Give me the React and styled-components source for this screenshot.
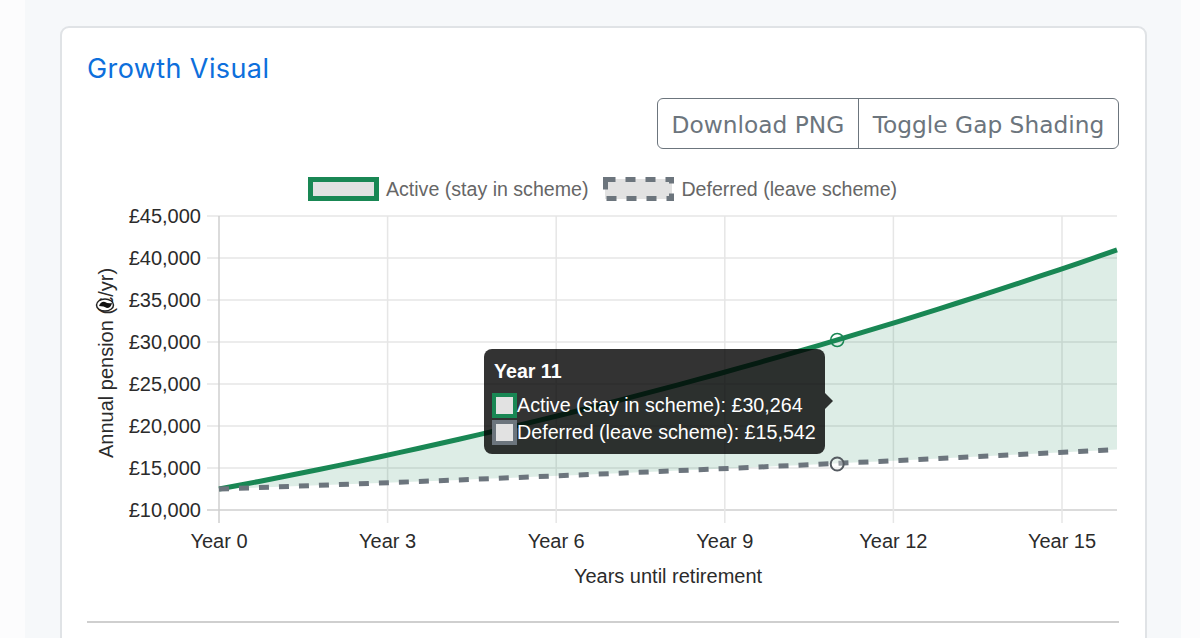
import styled, { createGlobalStyle } from "styled-components";

const GlobalStyle = createGlobalStyle`
  html, body {
    margin: 0;
    padding: 0;
    height: 638px;
    overflow: hidden;
    background: #fcfcfd;
  }
`;

const Page = styled.div`
  height: 638px;
  box-sizing: border-box;
  margin: 0 19px 0 25px;
  padding: 26px 34px 0 35px;
  overflow: hidden;
  background: #f6f8fa;
`;

const Card = styled.section`
  box-sizing: border-box;
  height: 640px;
  background: #fff;
  border: 2px solid #e0e3e6;
  border-radius: 9px;
  padding: 21px 26px 0 25px;
`;

const Title = styled.h2`
  margin: 0;
  font-family: "Inter", "Liberation Sans", sans-serif;
  font-weight: 400;
  font-size: 27px;
  letter-spacing: 0.4px;
  line-height: 40px;
  color: #0d6fdc;
`;

const Toolbar = styled.div`
  display: flex;
  justify-content: flex-end;
  margin-top: 9px;
`;

const ButtonGroup = styled.div`
  display: flex;
  border: 1.5px solid #6c757d;
  border-radius: 6px;
`;

const GroupButton = styled.button`
  height: 49px;
  padding: 2px 13.75px 0;
  border: 0;
  background: none;
  color: #6c757d;
  font-family: "DejaVu Sans", sans-serif;
  font-size: 23.3px;
  & + & {
    border-left: 1.5px solid #6c757d;
  }
`;

const Legend = styled.div`
  display: flex;
  justify-content: center;
  gap: 15px;
  margin-top: 28px;
  padding-right: 1px;
`;

const LegendItem = styled.div`
  display: flex;
  align-items: center;
  gap: 7px;
  height: 24px;
  font-family: "Liberation Sans", sans-serif;
  font-size: 19.6px;
  color: #666;
`;

const SwatchSvg = styled.svg`
  display: block;
  flex: none;
`;

const ChartArea = styled.div`
  position: relative;
  margin-top: 2px;
`;

const ChartSvg = styled.svg`
  display: block;
  text {
    font-family: "Liberation Sans", sans-serif;
    font-size: 20px;
    fill: #2b2b2b;
  }
`;

const Tooltip = styled.div`
  position: absolute;
  left: 397px;
  top: 146px;
  width: 341px;
  height: 105px;
  box-sizing: border-box;
  padding: 12px 10px;
  border-radius: 8px;
  background: rgba(0, 0, 0, 0.8);
  color: #fff;
  font-family: "Liberation Sans", sans-serif;
  font-size: 19.7px;
  &::after {
    content: "";
    position: absolute;
    left: 100%;
    top: 44px;
    border: 8px solid transparent;
    border-left-color: rgba(0, 0, 0, 0.8);
    border-right-width: 0;
  }
`;

const TooltipTitle = styled.div`
  font-weight: 700;
  font-size: 19.6px;
  line-height: 21px;
  margin-bottom: 10px;
`;

const TooltipRow = styled.div`
  display: flex;
  align-items: center;
  height: 27px;
  white-space: nowrap;
`;

const TooltipBox = styled.span`
  box-sizing: border-box;
  flex: none;
  width: 25px;
  height: 25px;
  margin-left: -2px;
  background: #e2e2e2;
  border: 4.5px solid ${(p) => p.$color};
`;

const Divider = styled.hr`
  margin: 26px 0 0;
  border: 0;
  border-top: 2px solid #cfcfcf;
`;

const GREEN = "#198754";
const GREY = "#6c757d";

// plot coordinates are page pixels, shifted to the svg origin
const LEFT = 219;
const RIGHT = 1117;
const X_OFF = 87;
const Y_OFF = 203;
const xTicks = [0, 3, 6, 9, 12, 15];
const yTicks = [45, 40, 35, 30, 25, 20, 15, 10];

const px = (x) => x - X_OFF;
const py = (y) => y - Y_OFF;
const yearX = (year) => LEFT + (year * 843) / 15;
const valueY = (k) => 510 - ((k - 10) * 42) / 5;

const activeY = (t) => 489 - 0.1858 * t - 0.0000895 * t * t;
const deferredY = (t) => 489 - 0.03579 * t - 0.0000091 * t * t;

function buildPoints(fn) {
  const pts = [];
  for (let x = LEFT; x < RIGHT; x += 20) pts.push([x, fn(x - LEFT)]);
  pts.push([RIGHT, fn(RIGHT - LEFT)]);
  return pts;
}

function toPath(pts) {
  return pts.map(([x, y], i) => `${i ? "L" : "M"}${px(x)} ${py(y)}`).join(" ");
}

function LegendSwatch({ color, dashed }) {
  return (
    <SwatchSvg width="71" height="24" viewBox="0 0 71 24">
      <rect x="2" y="2" width="67" height="20" fill="#e2e2e2" />
      <rect
        x="2.5"
        y="2.5"
        width="66"
        height="19"
        fill="none"
        stroke={color}
        strokeWidth="5"
        strokeDasharray={dashed ? "10 10" : undefined}
      />
    </SwatchSvg>
  );
}

function Chart() {
  const active = buildPoints(activeY);
  const deferred = buildPoints(deferredY);
  const gap = toPath(active) + " " + toPath([...deferred].reverse()).replace("M", "L") + " Z";
  const markerX = yearX(11);

  return (
    <ChartSvg width="1032" height="392" viewBox="0 0 1032 392">
      {yTicks.map((k) => (
        <g key={k}>
          <line
            x1={px(207)}
            x2={px(RIGHT)}
            y1={py(valueY(k))}
            y2={py(valueY(k))}
            stroke={k === 10 ? "#cfcfcf" : "#e6e6e6"}
            strokeWidth="1.5"
          />
          <text x={px(201)} y={py(valueY(k)) + 7} textAnchor="end">
            £{k},000
          </text>
        </g>
      ))}
      {xTicks.map((year) => (
        <g key={year}>
          <line
            x1={px(yearX(year))}
            x2={px(yearX(year))}
            y1={py(216)}
            y2={py(523)}
            stroke={year === 0 ? "#cfcfcf" : "#e6e6e6"}
            strokeWidth="1.5"
          />
          <text x={px(yearX(year))} y={py(548)} textAnchor="middle">
            Year {year}
          </text>
        </g>
      ))}
      <text x={px(668)} y={py(583)} textAnchor="middle">
        Years until retirement
      </text>
      <text transform={`translate(${px(113)} ${py(363)}) rotate(-90)`} textAnchor="middle">
        Annual pension (£/yr)
      </text>
      <ellipse cx={px(105)} cy={py(305)} rx="8.5" ry="6" fill="#fff" stroke="#222" strokeWidth="1.5" />
      <path
        d={`M${px(99)} ${py(306)} q2 -5 6 -4 q3 2 7 1 q-1 5 -5 5 q-3 -2 -8 -2 Z`}
        fill="#111"
      />
      <path d={gap} fill={GREEN} fillOpacity="0.15" />
      <path d={toPath(active)} fill="none" stroke={GREEN} strokeWidth="5" />
      <path d={toPath(deferred)} fill="none" stroke={GREY} strokeWidth="5" strokeDasharray="10 10" />
      <circle cx={px(markerX)} cy={py(340)} r="6.5" fill="none" stroke={GREEN} strokeWidth="1.5" />
      <circle cx={px(markerX)} cy={py(464)} r="6.5" fill="#fff" fillOpacity="0.3" stroke="#555b61" strokeWidth="2" />
    </ChartSvg>
  );
}

export default function App() {
  return (
    <>
      <GlobalStyle />
      <Page>
        <Card>
          <Title>Growth Visual</Title>
          <Toolbar>
            <ButtonGroup>
              <GroupButton>Download PNG</GroupButton>
              <GroupButton>Toggle Gap Shading</GroupButton>
            </ButtonGroup>
          </Toolbar>
          <Legend>
            <LegendItem>
              <LegendSwatch color={GREEN} />
              Active (stay in scheme)
            </LegendItem>
            <LegendItem>
              <LegendSwatch color={GREY} dashed />
              Deferred (leave scheme)
            </LegendItem>
          </Legend>
          <ChartArea>
            <Chart />
            <Tooltip>
              <TooltipTitle>Year 11</TooltipTitle>
              <TooltipRow>
                <TooltipBox $color={GREEN} />
                Active (stay in scheme): £30,264
              </TooltipRow>
              <TooltipRow>
                <TooltipBox $color={GREY} />
                Deferred (leave scheme): £15,542
              </TooltipRow>
            </Tooltip>
          </ChartArea>
          <Divider />
        </Card>
      </Page>
    </>
  );
}
